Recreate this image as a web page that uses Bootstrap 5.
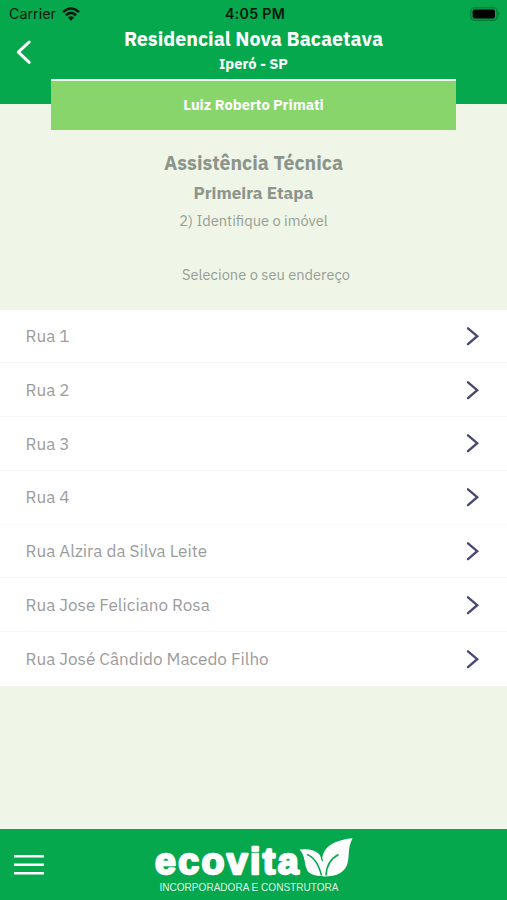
<!DOCTYPE html>
<html lang="pt-BR">
<head>
<meta charset="utf-8">
<meta name="viewport" content="width=device-width, initial-scale=1">
<title>Assistência Técnica</title>
<link href="https://cdn.jsdelivr.net/npm/bootstrap@5.3.0/dist/css/bootstrap.min.css" rel="stylesheet">
<style>
  body { font-family: "IBM Plex Sans", Roboto, "Liberation Sans", sans-serif; background: #eff5e7; overflow: hidden; }
  svg { display: block; }
  .app-header { background: #06a84d; height: 103.5px; }
  .status-bar { height: 27px; padding: 0 6px 0 9px; font-family: Inter, sans-serif; font-size: 14.3px; color: #04190c; }
  .status-side { flex: 1 1 0; }
  .wifi { margin-left: 6px; }
  .status-time { font-weight: 600; font-size: 14.2px; letter-spacing: .3px; }
  .title-row { height: 52px; }
  .back-btn { width: 51px; padding: 12px 0 0 15px; }
  .site-name { font-size: 19.6px; line-height: 24px; }
  .site-city { font-size: 14.6px; line-height: 20px; margin-top: 3px; }
  .user-card { width: 405px; height: 51px; background: #88d56c; border-top: 2.5px solid #f2fbef; padding-bottom: 2px; font-size: 14.65px; }
  .intro { height: 206px; padding-top: 46.5px; color: #8c948b; }
  .intro-title { font-size: 19.5px; line-height: 26px; }
  .intro-step { font-size: 17.1px; line-height: 24px; margin-top: 5px; }
  .intro-text { font-size: 14.65px; line-height: 20px; margin-top: 5.5px; color: #979e96; }
  .intro-hint { margin-top: 34px; padding-left: 25px; }
  .street { height: 53.75px; padding: 0 27px 0 25.5px; border: 0; border-bottom: 1.5px solid #f6f6f6; font-size: 17.1px; color: #9c9c9c; }
  .street:last-child { border-bottom-color: #fff; }
  .app-footer { background: #06a84d; height: 71.5px; }
</style>
</head>
<body>
<div class="vh-100 d-flex flex-column">
  <header class="app-header flex-shrink-0 text-white">
    <div class="status-bar d-flex align-items-center">
      <div class="status-side d-flex align-items-center">
        <span>Carrier</span>
        <svg class="wifi" width="18" height="14" viewBox="0 0 18 14" fill="none" stroke="#04190c" stroke-width="2.6"><path d="M1 5.1Q9-2.1 17 5.1M3.9 8.2Q9 3.7 14.1 8.2"/><path d="M5.9 10.5Q9 7.8 12.1 10.5L9 13.7Z" fill="#04190c" stroke="none"/></svg>
      </div>
      <span class="status-time">4:05 PM</span>
      <div class="status-side d-flex justify-content-end">
        <svg width="31" height="14" viewBox="0 0 31 14"><rect x=".8" y=".8" width="26.4" height="12.4" rx="3.6" fill="none" stroke="#067b3a" stroke-width="1.4"/><rect x="2.6" y="2.5" width="22.4" height="9" rx="2" fill="#000"/><path d="M28.4 4.8Q31 7 28.4 9.2Z" fill="#067b3a"/></svg>
      </div>
    </div>
    <div class="title-row d-flex">
      <div class="back-btn"><svg width="18" height="26" viewBox="0 0 18 26" fill="none" stroke="#fff" stroke-width="3" stroke-linecap="round" stroke-linejoin="round"><path d="M14.2 3L3.3 13.2L14.2 23.4"/></svg></div>
      <div class="flex-grow-1 text-center fw-bold">
        <div class="site-name">Residencial Nova Bacaetava</div>
        <div class="site-city">Iperó - SP</div>
      </div>
      <div class="back-btn"></div>
    </div>
    <div class="user-card mx-auto d-flex align-items-center justify-content-center fw-bold">Luiz Roberto Primati</div>
  </header>

  <main class="flex-grow-1">
    <div class="intro text-center">
      <div class="intro-title fw-bold">Assistência Técnica</div>
      <div class="intro-step fw-bold">Primeira Etapa</div>
      <div class="intro-text">2) Identifique o imóvel</div>
      <div class="intro-text intro-hint">Selecione o seu endereço</div>
    </div>
    <div class="list-group list-group-flush">
      <div class="list-group-item street d-flex align-items-center justify-content-between"><span>Rua 1</span><svg width="14" height="20" viewBox="0 0 14 20" fill="none" stroke="#484874" stroke-width="2.4" stroke-linecap="round"><path d="M2 2.3L11.2 10.2L2 18.1"/></svg></div>
      <div class="list-group-item street d-flex align-items-center justify-content-between"><span>Rua 2</span><svg width="14" height="20" viewBox="0 0 14 20" fill="none" stroke="#484874" stroke-width="2.4" stroke-linecap="round"><path d="M2 2.3L11.2 10.2L2 18.1"/></svg></div>
      <div class="list-group-item street d-flex align-items-center justify-content-between"><span>Rua 3</span><svg width="14" height="20" viewBox="0 0 14 20" fill="none" stroke="#484874" stroke-width="2.4" stroke-linecap="round"><path d="M2 2.3L11.2 10.2L2 18.1"/></svg></div>
      <div class="list-group-item street d-flex align-items-center justify-content-between"><span>Rua 4</span><svg width="14" height="20" viewBox="0 0 14 20" fill="none" stroke="#484874" stroke-width="2.4" stroke-linecap="round"><path d="M2 2.3L11.2 10.2L2 18.1"/></svg></div>
      <div class="list-group-item street d-flex align-items-center justify-content-between"><span>Rua Alzira da Silva Leite</span><svg width="14" height="20" viewBox="0 0 14 20" fill="none" stroke="#484874" stroke-width="2.4" stroke-linecap="round"><path d="M2 2.3L11.2 10.2L2 18.1"/></svg></div>
      <div class="list-group-item street d-flex align-items-center justify-content-between"><span>Rua Jose Feliciano Rosa</span><svg width="14" height="20" viewBox="0 0 14 20" fill="none" stroke="#484874" stroke-width="2.4" stroke-linecap="round"><path d="M2 2.3L11.2 10.2L2 18.1"/></svg></div>
      <div class="list-group-item street d-flex align-items-center justify-content-between"><span>Rua José Cândido Macedo Filho</span><svg width="14" height="20" viewBox="0 0 14 20" fill="none" stroke="#484874" stroke-width="2.4" stroke-linecap="round"><path d="M2 2.3L11.2 10.2L2 18.1"/></svg></div>
    </div>
  </main>

  <footer class="app-footer flex-shrink-0 d-flex">
    <svg width="507" height="71" viewBox="0 0 507 71" fill="#fff">
      <path d="M14 26h30v2.5H14zM14 34.5h30V37H14zM14 43h30v2.5H14z"/>
      <text x="155" y="45.3" font-family="Liberation Sans, sans-serif" font-weight="700" font-size="37.5" stroke="#fff" stroke-width="2.4" stroke-linejoin="round" textLength="143.5" lengthAdjust="spacing">ecovita</text>
      <path d="M299.5 20.5Q313 19 319 25Q324 30 323.5 47Q312 47.500 307.500 42Q305 37 304.500 31Q303 24 299.500 20.500Z"/>
      <path d="M352.500 9.200C347 20 350 28 347 36Q342 48 323 47.500Q319 29 325.500 20.500Q333 11 352.500 9.200Z"/>
      <path d="M307 25.500Q317 29 321.500 46.500M338.500 25.500Q326.500 32 326 46.500" fill="none" stroke="#06a84d" stroke-width="1.500"/>
      <path d="M320.5 24Q321.500 29 322.500 32" fill="none" stroke="#06a84d" stroke-width="1.200"/>
      <text x="159.5" y="61.8" font-family="Liberation Sans, sans-serif" font-size="10.3" textLength="179" lengthAdjust="spacingAndGlyphs" fill="#dcf5e5">INCORPORADORA E CONSTRUTORA</text>
    </svg>
  </footer>
</div>
<script src="https://cdn.jsdelivr.net/npm/bootstrap@5.3.0/dist/js/bootstrap.bundle.min.js"></script>
</body>
</html>
